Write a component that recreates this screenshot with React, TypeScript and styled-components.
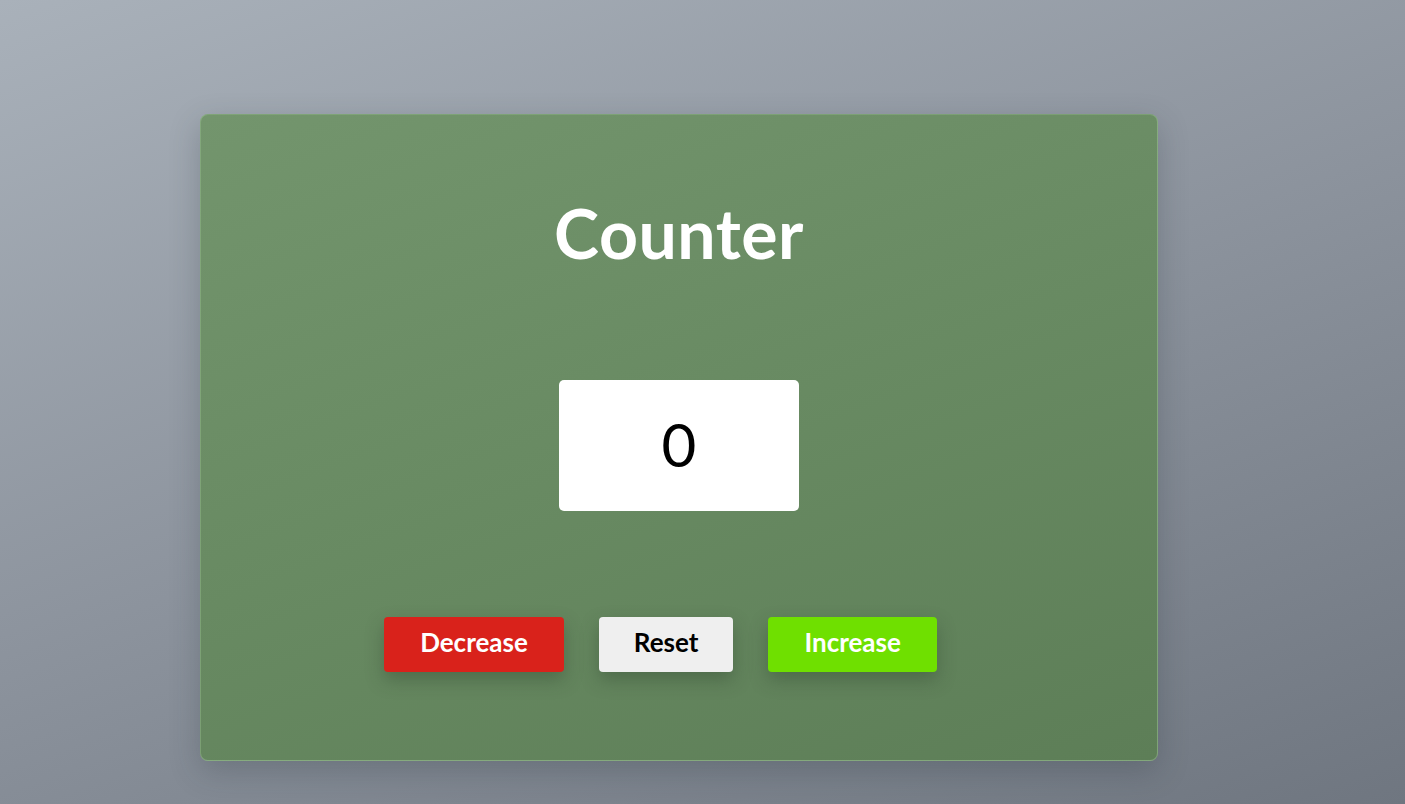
import React, { useState } from "react";
import styled, { createGlobalStyle } from "styled-components";

const GlobalStyle = createGlobalStyle`
  html, body {
    margin: 0;
    padding: 0;
    height: 100%;
  }
  body {
    font-family: Lato, "Open Sans", sans-serif;
    background: linear-gradient(160deg, #a9b1ba 0%, #8c939d 50%, #6f7680 100%);
    min-height: 804px;
    overflow: hidden;
  }
`;

const Page = styled.main`
  min-height: 804px;
  box-sizing: border-box;
  padding: 114px 0 0 200px;
`;

const Card = styled.section`
  width: 958px;
  height: 647px;
  box-sizing: border-box;
  border-radius: 8px;
  border: 1px solid rgba(160, 200, 150, 0.45);
  background: linear-gradient(160deg, #73956d 0%, #688a62 50%, #5d7e57 100%);
  box-shadow: 0 10px 30px rgba(40, 50, 60, 0.25);
  display: flex;
  flex-direction: column;
  align-items: center;
  padding-top: 76px;
`;

const Title = styled.h1`
  margin: 0;
  font-family: Lato, sans-serif;
  font-weight: 700;
  font-size: 68px;
  line-height: 84px;
  color: #ffffff;
  letter-spacing: 0.5px;
`;

const Display = styled.div`
  margin-top: 105px;
  width: 240px;
  height: 131px;
  border-radius: 5px;
  background: #ffffff;
  display: flex;
  align-items: center;
  justify-content: center;
  font-family: Lato, sans-serif;
  font-size: 60px;
  font-weight: 400;
  color: #000;
  padding-bottom: 4px;
  box-sizing: border-box;
`;

const Buttons = styled.div`
  margin-top: 106px;
  display: flex;
  gap: 35px;
  margin-right: 37px;
`;

const Button = styled.button<{ $bg: string; $fg: string; $px: number }>`
  height: 55px;
  padding: 0 ${(p) => p.$px}px 6px;
  border: none;
  border-radius: 4px;
  background: ${(p) => p.$bg};
  color: ${(p) => p.$fg};
  font-family: Lato, sans-serif;
  font-weight: 700;
  font-size: 26px;
  cursor: pointer;
  box-shadow: 0 8px 18px rgba(40, 60, 40, 0.35);
`;

export default function App() {
  const [count, setCount] = useState(0);
  return (
    <>
      <GlobalStyle />
      <Page>
        <Card>
          <Title>Counter</Title>
          <Display>{count}</Display>
          <Buttons>
            <Button $bg="#d9221b" $fg="#ffffff" $px={36} onClick={() => setCount(count - 1)}>
              Decrease
            </Button>
            <Button $bg="#efefef" $fg="#000000" $px={35} onClick={() => setCount(0)}>
              Reset
            </Button>
            <Button $bg="#6fe000" $fg="#ffffff" $px={36} onClick={() => setCount(count + 1)}>
              Increase
            </Button>
          </Buttons>
        </Card>
      </Page>
    </>
  );
}
